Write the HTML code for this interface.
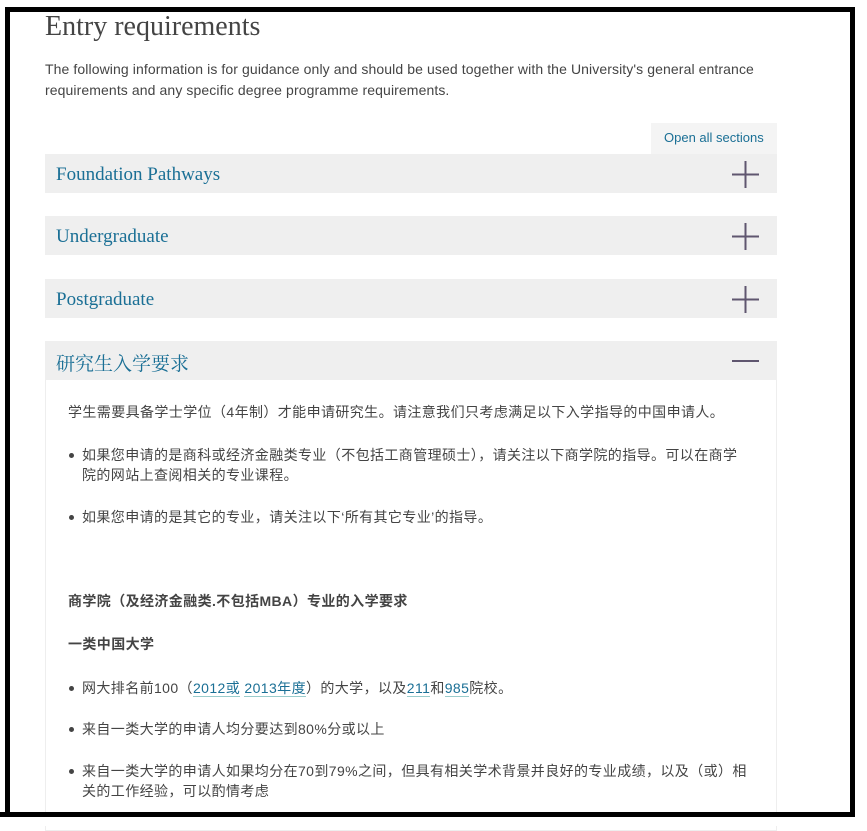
<!DOCTYPE html>
<html><head><meta charset="utf-8"><style>
body{margin:0;width:867px;height:826px;background:#fff;position:relative;overflow:hidden;font-family:"Liberation Sans","Noto Sans CJK SC",sans-serif;color:#444}
.frame{position:absolute;left:5px;top:7px;width:840px;height:800px;border:5px solid #000;border-right-width:5px}
.a{position:absolute;white-space:nowrap}
.t{font-size:14px;line-height:20px;color:#444;letter-spacing:0.4px}
.e{letter-spacing:0.1px}
.h{position:absolute;left:45px;width:732px;height:39px;background:#efefef}
.h span{position:absolute;left:11px;top:10px;font-family:"Liberation Serif","Noto Serif CJK SC",serif;font-size:19px;color:#1a6f95}
.h svg{position:absolute;right:18px;top:7px}
.dot{position:absolute;width:5px;height:5px;border-radius:50%;background:#444}
a{color:#1a6f95;text-decoration:none;border-bottom:1px solid #9cc}
</style></head><body>
<div class="frame"></div>
<div class="a" style="left:45px;top:11px;font-family:'Liberation Serif',serif;font-size:28px;color:#444">Entry requirements</div>
<div class="a t e" style="left:45px;top:59px">The following information is for guidance only and should be used together with the University's general entrance</div>
<div class="a t e" style="left:45px;top:80px">requirements and any specific degree programme requirements.</div>
<div class="a" style="left:651px;top:123px;width:126px;height:31px;background:#f4f4f4"><span style="position:absolute;left:13px;top:7px;font-size:13px;color:#1a6f95">Open all sections</span></div>
<div class="h" style="top:154px"><span>Foundation Pathways</span><svg width="27" height="27"><path d="M0 13.5H27M13.5 0V27" stroke="#5f566f" stroke-width="2"/></svg></div>
<div class="h" style="top:216px"><span>Undergraduate</span><svg width="27" height="27"><path d="M0 13.5H27M13.5 0V27" stroke="#5f566f" stroke-width="2"/></svg></div>
<div class="h" style="top:279px"><span>Postgraduate</span><svg width="27" height="27"><path d="M0 13.5H27M13.5 0V27" stroke="#5f566f" stroke-width="2"/></svg></div>
<div class="h" style="top:341px"><span style="top:8px">研究生入学要求</span><svg width="27" height="27"><path d="M0 13H27" stroke="#5f566f" stroke-width="2"/></svg></div>
<div class="a" style="left:45px;top:380px;width:730px;height:450px;border:1px solid #eee;border-top:none"></div>
<div class="a t" style="left:68px;top:402px">学生需要具备学士学位（4年制）才能申请研究生。请注意我们只考虑满足以下入学指导的中国申请人。</div>
<div class="dot" style="left:69px;top:453px"></div>
<div class="a t" style="left:82px;top:445px">如果您申请的是商科或经济金融类专业（不包括工商管理硕士），请关注以下商学院的指导。可以在商学</div>
<div class="a t" style="left:82px;top:465px">院的网站上查阅相关的专业课程。</div>
<div class="dot" style="left:69px;top:515px"></div>
<div class="a t" style="left:82px;top:507px">如果您申请的是其它的专业，请关注以下‘所有其它专业’的指导。</div>
<div class="a t" style="left:68px;top:591px;font-weight:bold">商学院（及经济金融类.不包括MBA）专业的入学要求</div>
<div class="a t" style="left:68px;top:634px;font-weight:bold">一类中国大学</div>
<div class="dot" style="left:69px;top:686px"></div>
<div class="a t" style="left:82px;top:678px">网大排名前100（<a>2012或</a> <a>2013年度</a>）的大学，以及<a>211</a>和<a>985</a>院校。</div>
<div class="dot" style="left:69px;top:727px"></div>
<div class="a t" style="left:82px;top:719px">来自一类大学的申请人均分要达到80%分或以上</div>
<div class="dot" style="left:69px;top:769px"></div>
<div class="a t" style="left:82px;top:761px">来自一类大学的申请人如果均分在70到79%之间，但具有相关学术背景并良好的专业成绩，以及（或）相</div>
<div class="a t" style="left:82px;top:781px">关的工作经验，可以酌情考虑</div>
<div class="a" style="left:0;top:812px;width:867px;height:5px;background:#000"></div>
<div class="a" style="left:0;top:817px;width:867px;height:9px;background:#fff"></div>
<div class="a" style="left:850px;top:7px;width:5px;height:810px;background:#000"></div>
<div class="a" style="left:855px;top:0;width:12px;height:826px;background:#fff"></div>
</body></html>
